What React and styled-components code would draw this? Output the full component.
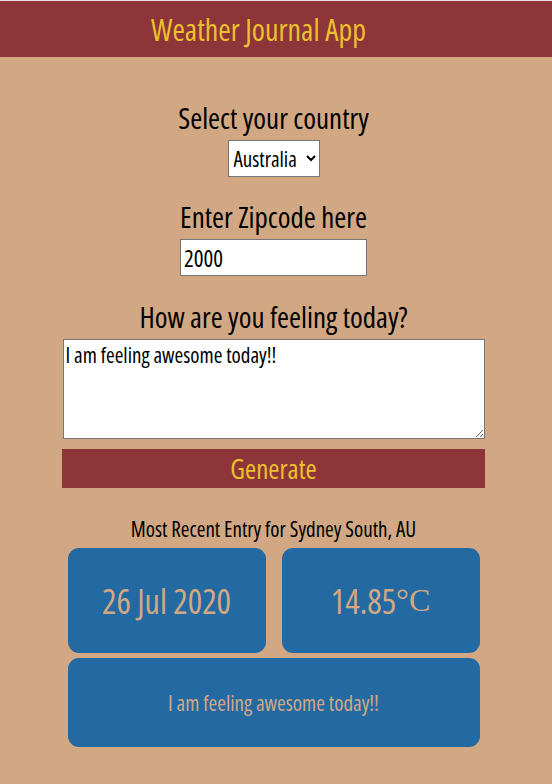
import React from "react";
import styled, { createGlobalStyle } from "styled-components";

const Global = createGlobalStyle`
  html, body {
    margin: 0;
    padding: 0;
    background-color: #d2a884;
  }
  body {
    font-family: "Open Sans", "DejaVu Sans", sans-serif;
    font-stretch: condensed;
    font-weight: 500;
    color: #000;
  }
`;

const App = () => {
  return (
    <>
      <Global />
      <Header>
        <Title>Weather Journal App</Title>
      </Header>
      <Main>
        <Label>Select your country</Label>
        <Select defaultValue="AU">
          <option value="AU">Australia</option>
        </Select>
        <Label $top={24}>Enter Zipcode here</Label>
        <Input defaultValue="2000" />
        <Label $top={25}>How are you feeling today?</Label>
        <TextArea defaultValue="I am feeling awesome today!!" />
        <Button>Generate</Button>
        <EntryTitle>Most Recent Entry for Sydney South, AU</EntryTitle>
        <Cards>
          <Card>26 Jul 2020</Card>
          <Card>
            14.85<Unit>°C</Unit>
          </Card>
          <Card $wide $small>
            I am feeling awesome today!!
          </Card>
        </Cards>
      </Main>
    </>
  );
};

export default App;

const Header = styled.header`
  border-top: 1px solid #e6e1dc;
  background-color: #8e353a;
  height: 56px;
  display: flex;
  align-items: center;
  justify-content: center;
  padding-right: 35px;
`;

const Title = styled.h1`
  margin: 0;
  color: #ecc12b;
  font-size: 30px;
  font-weight: 500;
`;

const Main = styled.main`
  display: flex;
  flex-direction: column;
  align-items: center;
  padding-top: 45px;
  padding-right: 5px;
`;

const Label = styled.div`
  font-size: 29px;
  line-height: 32px;
  margin-top: ${(p) => p.$top || 0}px;
  margin-bottom: 6px;
`;

const Select = styled.select`
  font-family: inherit;
  font-stretch: condensed;
  font-weight: 500;
  font-size: 21px;
  height: 37px;
  width: 92px;
  padding: 0 1px;
  background: #fff;
  border: 1px solid #767676;
  border-radius: 0;
  color: #000;
`;

const Input = styled.input`
  box-sizing: border-box;
  font-family: inherit;
  font-stretch: condensed;
  font-weight: 500;
  font-size: 23px;
  height: 37px;
  width: 187px;
  padding: 0 3px;
  border: 1px solid #767676;
  color: #000;
`;

const TextArea = styled.textarea`
  box-sizing: border-box;
  font-family: inherit;
  font-stretch: condensed;
  font-weight: 500;
  font-size: 21px;
  line-height: 26px;
  width: 422px;
  height: 100px;
  padding: 2px 2px;
  border: 1px solid #767676;
  color: #000;
`;

const Button = styled.button`
  margin-top: 10px;
  width: 423px;
  height: 39px;
  border: none;
  background-color: #8e353a;
  color: #ecc12b;
  font-family: inherit;
  font-stretch: condensed;
  font-weight: 500;
  font-size: 27px;
  padding: 0;
`;

const EntryTitle = styled.div`
  margin-top: 28px;
  font-size: 21px;
  line-height: 26px;
`;

const Cards = styled.div`
  margin-top: 6px;
  width: 412px;
  display: grid;
  grid-template-columns: 198px 198px;
  column-gap: 16px;
  row-gap: 5px;
`;

const Card = styled.div`
  grid-column: ${(p) => (p.$wide ? "1 / span 2" : "auto")};
  height: ${(p) => (p.$wide ? 89 : 105)}px;
  border-radius: 11px;
  background-color: #236aa3;
  color: #d2a884;
  font-size: ${(p) => (p.$small ? 21 : 34)}px;
  display: flex;
  align-items: center;
  justify-content: center;
`;

const Unit = styled.span`
  font-family: "Liberation Serif", "DejaVu Serif", serif;
  font-stretch: normal;
  font-weight: 400;
  font-size: 32px;
`;
